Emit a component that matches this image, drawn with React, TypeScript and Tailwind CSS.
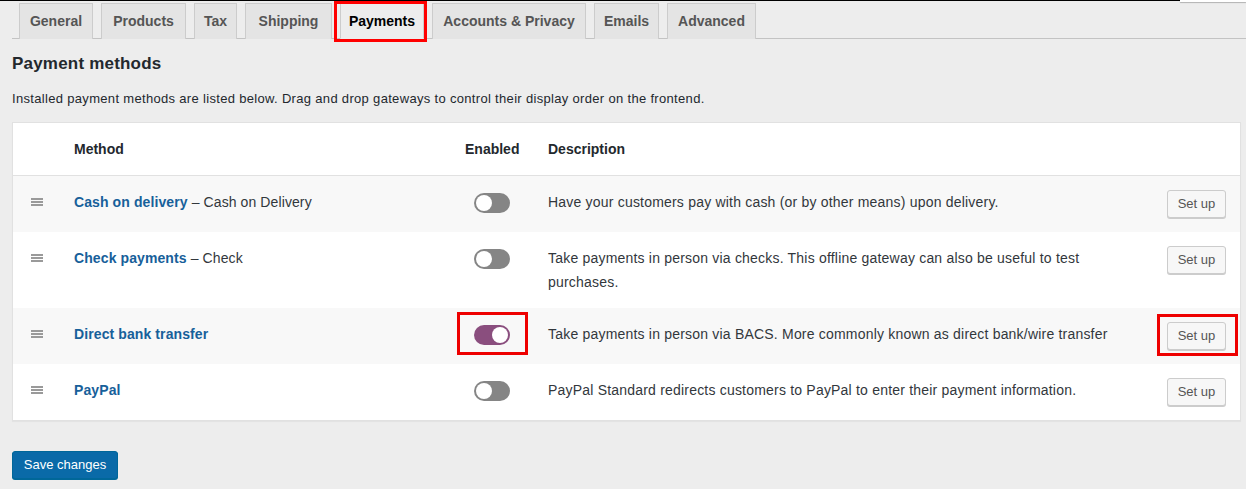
import { useState } from 'react';

const tabs = [
  { label: 'General', w: 'w-[74px]' },
  { label: 'Products', w: 'w-[85px]' },
  { label: 'Tax', w: 'w-[43px]' },
  { label: 'Shipping', w: 'w-[87px]' },
  { label: 'Payments', w: 'w-[84px]', active: true },
  { label: 'Accounts & Privacy', w: 'w-[154px]' },
  { label: 'Emails', w: 'w-[65px]' },
  { label: 'Advanced', w: 'w-[89px]' },
];

const methods = [
  {
    name: 'Cash on delivery',
    sub: 'Cash on Delivery',
    enabled: false,
    desc: ['Have your customers pay with cash (or by other means) upon delivery.'],
  },
  {
    name: 'Check payments',
    sub: 'Check',
    enabled: false,
    desc: ['Take payments in person via checks. This offline gateway can also be useful to test', 'purchases.'],
  },
  {
    name: 'Direct bank transfer',
    enabled: true,
    highlight: true,
    desc: ['Take payments in person via BACS. More commonly known as direct bank/wire transfer'],
  },
  {
    name: 'PayPal',
    enabled: false,
    desc: ['PayPal Standard redirects customers to PayPal to enter their payment information.'],
  },
];

function Handle() {
  return (
    <svg width="12" height="8" viewBox="0 0 12 8" className="mt-[8px]">
      <rect x="0" y="0" width="12" height="2" fill="#9a9a9a" />
      <rect x="0" y="3" width="12" height="2" fill="#9a9a9a" />
      <rect x="0" y="6" width="12" height="2" fill="#9a9a9a" />
    </svg>
  );
}

function Toggle({ on, onClick }: { on: boolean; onClick: () => void }) {
  return (
    <button
      type="button"
      onClick={onClick}
      className={`relative flex h-[20px] w-[36px] items-center rounded-full px-[2px] cursor-pointer ${on ? 'bg-[#8a4e7e] justify-end' : 'bg-[#858585] justify-start'}`}
    >
      <span className="h-[16px] w-[16px] rounded-full bg-white" />
    </button>
  );
}

export default function App() {
  const [enabled, setEnabled] = useState(methods.map(m => m.enabled));

  return (
    <div className="relative h-[489px] w-[1246px] overflow-hidden bg-[#ededed] font-['Liberation_Sans',Arial,sans-serif] text-[#32373c]">
      {/* window chrome edge + help tab */}
      <div className="absolute left-0 top-0 h-px w-[1180px] bg-black" />
      <div className="absolute right-0 top-0 h-[2px] w-[66px] bg-white shadow-[0_1px_1px_rgba(0,0,0,0.25)]" />

      {/* Tabs */}
      <nav className="ml-3 flex h-[39px] gap-2 border-b border-[#c3c3c3] pl-[7px] pt-[3px]">
        {tabs.map(t => (
          <div key={t.label} className="relative">
            <a
              className={`flex h-[36px] items-center justify-center border border-[#cccccc] text-[14px] font-bold ${t.w} ${
                t.active ? 'border-b-[#ededed] bg-[#ededed] text-black' : 'border-b-0 bg-[#e4e4e4] text-[#555]'
              }`}
            >
              {t.label}
            </a>
            {t.active && (
              <span className="pointer-events-none absolute -left-[6px] -right-[3px] -top-[2px] h-[41px] border-[3px] border-[#f00]" />
            )}
          </div>
        ))}
      </nav>

      <h2 className="ml-3 mt-[13px] text-[17px] font-bold leading-[24px] tracking-[0.2px] text-[#23282d]">Payment methods</h2>
      <p className="ml-3 mt-[13px] text-[13px] leading-[20px] tracking-[0.32px] text-[#23282d]">
        Installed payment methods are listed below. Drag and drop gateways to control their display order on the frontend.
      </p>

      {/* Gateways table */}
      <div className="ml-3 mt-[13px] w-[1229px] border border-[#e1e1e1] bg-white text-[14px] shadow-[0_1px_1px_rgba(0,0,0,0.04)]">
        <div className="flex h-[53px] items-center border-b border-[#e1e1e1] font-bold text-[#23282d]">
          <div className="w-[61px]" />
          <div className="w-[391px]">Method</div>
          <div className="w-[83px]">Enabled</div>
          <div>Description</div>
        </div>
        {methods.map((m, i) => (
          <div key={m.name} className={`flex items-start py-[14px] leading-[24px] ${i % 2 === 0 ? 'bg-[#f8f8f8]' : 'bg-white'}`}>
            <div className="flex w-[61px] justify-start pl-[18px]">
              <Handle />
            </div>
            <div className="w-[391px] tracking-[0.1px]">
              <a className="cursor-pointer font-bold text-[#17609a]">{m.name}</a>
              {m.sub && <span> – {m.sub}</span>}
            </div>
            <div className="w-[83px] pl-[9px]">
              <div className="relative mt-[3px] w-[36px]">
                <Toggle on={enabled[i]} onClick={() => setEnabled(enabled.map((v, j) => (j === i ? !v : v)))} />
                {m.highlight && (
                  <span className="pointer-events-none absolute -bottom-[10px] -left-[17px] -right-[18px] -top-[13px] border-[3px] border-[#e00]" />
                )}
              </div>
            </div>
            <div className="w-[590px] tracking-[0.2px]">
              {m.desc.map((line, k) => (
                <div key={k} className="whitespace-nowrap">
                  {line}
                </div>
              ))}
            </div>
            <div className="relative ml-[29px]">
              <button
                type="button"
                className="h-[28px] w-[59px] rounded-[3px] border border-[#cccccc] bg-[#f7f7f7] text-[13px] leading-[26px] text-[#555] shadow-[0_1px_0_#cccccc]"
              >
                Set up
              </button>
              {m.highlight && (
                <span className="pointer-events-none absolute -bottom-[6px] -left-[10px] -right-[12px] -top-[8px] border-[3px] border-[#e00]" />
              )}
            </div>
          </div>
        ))}
      </div>

      <button
        type="button"
        className="ml-3 mt-[30px] h-[28px] w-[106px] rounded-[3px] border border-[#006799] bg-[#0a6aa8] text-[13px] text-white shadow-[0_1px_0_#006799]"
      >
        Save changes
      </button>
    </div>
  );
}
